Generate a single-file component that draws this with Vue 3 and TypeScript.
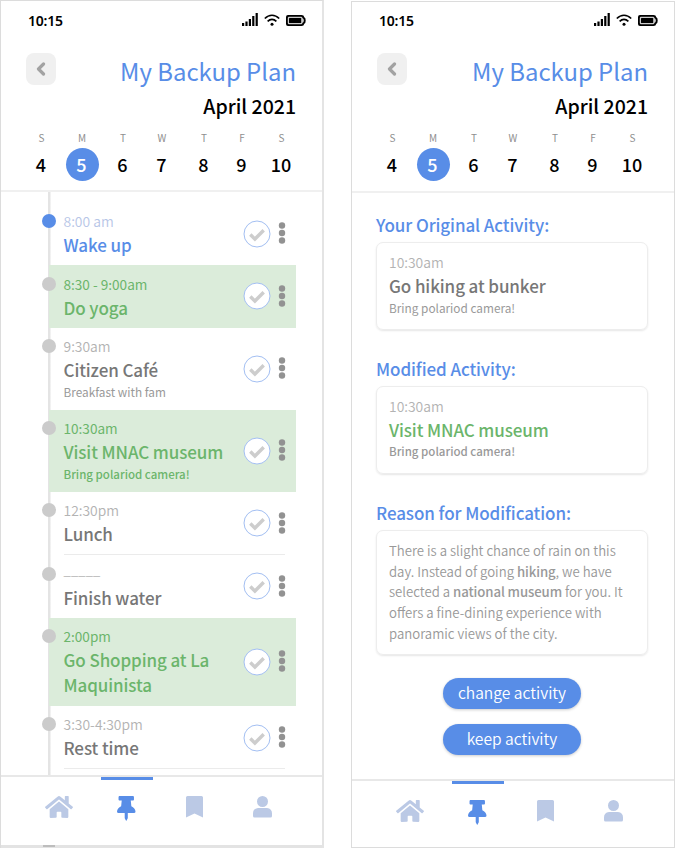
<script setup lang="ts">
import { h, type FunctionalComponent } from 'vue'

interface Day { letter: string; date: number }
interface Activity {
  time: string
  title: string
  note?: string
  size: 'short' | 'tall' | 'wrapped'
  kind?: 'current' | 'backup' | 'untimed'
  divider?: boolean
}

const days: Day[] = [
  { letter: 'S', date: 4 },
  { letter: 'M', date: 5 },
  { letter: 'T', date: 6 },
  { letter: 'W', date: 7 },
  { letter: 'T', date: 8 },
  { letter: 'F', date: 9 },
  { letter: 'S', date: 10 },
]
const selected = 5

const activities: Activity[] = [
  { time: '8:00 am', title: 'Wake up', size: 'short', kind: 'current' },
  { time: '8:30 - 9:00am', title: 'Do yoga', size: 'short', kind: 'backup' },
  { time: '9:30am', title: 'Citizen Café', note: 'Breakfast with fam', size: 'tall' },
  { time: '10:30am', title: 'Visit MNAC museum', note: 'Bring polariod camera!', size: 'tall', kind: 'backup' },
  { time: '12:30pm', title: 'Lunch', size: 'short', divider: true },
  { time: '_____', title: 'Finish water', size: 'short', kind: 'untimed' },
  { time: '2:00pm', title: 'Go Shopping at La Maquinista', size: 'wrapped', kind: 'backup' },
  { time: '3:30-4:30pm', title: 'Rest time', size: 'short', divider: true },
]

const comparisons = [
  { heading: 'Your Original Activity:', title: 'Go hiking at bunker', backup: false },
  { heading: 'Modified Activity:', title: 'Visit MNAC museum', backup: true },
]

const screens = ['plan', 'detail'] as const

const glyphs: Record<string, { box: string; d: string }> = {
  home: {
    box: '0 32 576 448',
    d: 'M280.37 148.26L96 300.11V464a16 16 0 0 0 16 16l112.06-.29a16 16 0 0 0 15.92-16V368a16 16 0 0 1 16-16h64a16 16 0 0 1 16 16v95.64a16 16 0 0 0 16 16.05L464 480a16 16 0 0 0 16-16V300L295.67 148.26a12.19 12.19 0 0 0-15.3 0zM571.6 251.47L488 182.56V44.05a12 12 0 0 0-12-12h-56a12 12 0 0 0-12 12v72.61L318.47 43a48 48 0 0 0-61 0L4.34 251.47a12 12 0 0 0-1.6 16.9l25.5 31A12 12 0 0 0 45.15 301l235.22-193.74a12.19 12.19 0 0 1 15.3 0L530.9 301a12 12 0 0 0 16.9-1.6l25.5-31a12 12 0 0 0-1.7-16.93z',
  },
  pin: {
    box: '0 0 384 512',
    d: 'M298.028 214.267L285.793 96H328c13.255 0 24-10.745 24-24V24c0-13.255-10.745-24-24-24H56C42.745 0 32 10.745 32 24v48c0 13.255 10.745 24 24 24h42.207L85.972 214.267C37.465 236.82 0 277.261 0 328c0 13.255 10.745 24 24 24h136v104.007c0 1.242.289 2.467.845 3.578l24 48c2.941 5.882 11.364 5.893 14.311 0l24-48a8.008 8.008 0 0 0 .845-3.578V352h136c13.255 0 24-10.745 24-24-.001-51.183-37.983-91.42-85.973-113.733z',
  },
  bookmark: { box: '0 0 17 21.5', d: 'M1.5 0H15.5Q17 0 17 1.5V21.5L8.5 17.4L0 21.5V1.5Q0 0 1.5 0Z' },
  user: {
    box: '0 0 19 21.5',
    d: 'M9.5 0a5.5 5.5 0 1 1 0 11a5.500 5.500 0 1 1 0-11zM5 12H14Q19 12.600 19 17.500V20Q19 21.500 17.500 21.500H1.500Q0 21.500 0 20V17.500Q0 12.600 5 12Z',
  },
}

const Glyph: FunctionalComponent<{ name: string }> = (props) =>
  h('svg', { viewBox: glyphs[props.name].box, fill: 'currentColor' }, [h('path', { d: glyphs[props.name].d })])
Glyph.props = ['name']

const tabs = ['home', 'pin', 'bookmark', 'user']
</script>

<template>
  <main class="board">
    <section v-for="screen in screens" :key="screen" class="phone" :class="screen">
      <header class="top">
        <div class="status">
          <span class="clock">10:15</span>
          <span class="indicators">
            <svg class="signal" viewBox="0 0 16 13">
              <path d="M0 10h2.200v3H0zM3.400 8.500h2.200V13H3.400zM6.800 6h2.200v7H6.800zM10.200 3h2.200v10h-2.200zM13.600 0h2.200v13h-2.200z" />
            </svg>
            <svg class="wifi" viewBox="0 0 16 12" fill="none" stroke="#000" stroke-width="1.6">
              <path d="M.8 4.500C5 .1 11 .1 15.200 4.500M3.600 7.400C6.300 4.700 9.700 4.700 12.400 7.400" />
              <circle cx="8" cy="10.200" r="1.500" fill="#000" stroke="none" />
            </svg>
            <svg class="battery" viewBox="0 0 20 11">
              <path d="M2 0H15.500Q18 0 18.300 2.300Q19.700 2.700 19.700 5.500Q19.700 8.300 18.300 8.700Q18 11 15.500 11H2Q0 11 0 9V2Q0 0 2 0Z" />
              <path d="M3 1.700H15Q16.400 1.700 16.400 3Q17.900 3.600 17.900 5.500Q17.900 7.400 16.400 8Q16.400 9.300 15 9.300H3Q1.800 9.300 1.800 8V3Q1.800 1.700 3 1.700Z" fill="#ccc" />
              <rect x="3" y="2.900" width="12.200" height="5.200" rx=".5" />
            </svg>
          </span>
        </div>
        <div class="heading">
          <button class="back" aria-label="Back">
            <svg viewBox="0 0 10 14"><path d="M7.500 2L2.500 7L7.500 12" fill="none" stroke="#a2a2a2" stroke-width="3.200" stroke-linecap="round" stroke-linejoin="round" /></svg>
          </button>
          <div class="titles">
            <h1>My Backup Plan</h1>
            <p class="month">April 2021</p>
          </div>
        </div>
        <div class="week">
          <div v-for="day in days" :key="day.date" class="day">
            <span class="letter">{{ day.letter }}</span>
            <span class="date" :class="{ selected: day.date === selected }"><span>{{ day.date }}</span></span>
          </div>
        </div>
      </header>

      <div v-if="screen === 'plan'" class="timeline">
        <article v-for="item in activities" :key="item.title" class="row" :class="[item.size, item.kind, { divider: item.divider }]">
          <i class="dot"></i>
          <div class="text">
            <p class="time">{{ item.time }}</p>
            <h2>{{ item.title }}</h2>
            <p v-if="item.note" class="note">{{ item.note }}</p>
          </div>
          <svg class="check" viewBox="0 0 28 28">
            <circle cx="14" cy="14" r="13" fill="#fff" stroke="#a3bff2" />
            <path d="M7.300 14.500L11.900 19.100L20.700 10.200" fill="none" stroke="#cdcdcd" stroke-width="3.400" />
          </svg>
          <svg class="more" viewBox="0 0 8 22" fill="#929292">
            <circle cx="4" cy="3.500" r="3.200" /><circle cx="4" cy="11" r="3.200" /><circle cx="4" cy="18.500" r="3.200" />
          </svg>
        </article>
      </div>

      <div v-else class="body">
        <section v-for="entry in comparisons" :key="entry.heading" class="group">
          <h3>{{ entry.heading }}</h3>
          <div class="card" :class="{ backup: entry.backup }">
            <p class="time">10:30am</p>
            <h2>{{ entry.title }}</h2>
            <p class="note">Bring polariod camera!</p>
          </div>
        </section>
        <section class="group">
          <h3>Reason for Modification:</h3>
          <div class="card reason">
            There is a slight chance of rain on this<br />day. Instead of going <b>hiking</b>, we have<br />selected a <b>national museum</b> for you. It<br />offers a fine-dining experience with<br />panoramic views of the city.
          </div>
        </section>
        <div class="actions">
          <button>change activity</button>
          <button>keep activity</button>
        </div>
      </div>

      <nav class="tabs">
        <a v-for="tab in tabs" :key="tab" class="tab" :class="[tab, { active: tab === 'pin' }]"><Glyph :name="tab" /></a>
      </nav>
      <div v-if="screen === 'plan'" class="edge"><i></i></div>
    </section>
  </main>
</template>

<style>
body { background: #fff; }
</style>

<style scoped>
* { box-sizing: border-box; }
h1, h2, h3, p { margin: 0; }
button { border: 0; padding: 0; font: inherit; }
svg { display: block; flex: none; }
.board {
  display: flex;
  justify-content: space-between;
  width: 675px;
  height: 848px;
  overflow: hidden;
  font-family: "Noto Sans CJK JP", "Noto Sans", sans-serif;
  font-weight: 400;
}
.phone {
  display: flex;
  flex-direction: column;
  width: 324px;
  height: 848px;
  border: 1px solid #dcdcdc;
  border-right: 2px solid #e4e4e4;
  border-bottom: 0;
  background: #fff;
}
.phone.detail { height: 847px; margin-top: 1px; border: 1px solid #dcdcdc; }
.top { flex: none; height: 191px; border-bottom: 2px solid #f0f0f0; }
.detail .top { height: 192px; margin-top: -1px; }
.status { display: flex; justify-content: space-between; align-items: center; height: 24px; margin: 7px 16px 0 27px; }
.clock { padding-top: 2px; font: 600 14px/24px "Noto Sans", "Open Sans", sans-serif; letter-spacing: -0.2px; }
.indicators { display: flex; align-items: center; gap: 6px; }
.signal { width: 16px; height: 13px; margin-bottom: 1px; }
.wifi { width: 16px; height: 12px; }
.battery { width: 20px; height: 11px; }
.heading { display: flex; justify-content: space-between; margin: 20px 26px 0 25px; }
.back { display: flex; align-items: center; justify-content: center; width: 30px; height: 32px; margin-top: 1px; border-radius: 8px; background: #f0f0f0; }
.back svg { width: 10px; height: 14px; margin-right: 1px; }
.titles { text-align: right; }
h1 { font-weight: 400; font-size: 23.900px; line-height: 37px; color: #588de7; white-space: nowrap; }
.month { font-weight: 500; font-size: 19.500px; line-height: 33px; color: #000; }
.week { display: grid; grid-template-columns: 41px 40px 42px 36px 48px 28px 51px; margin: 8px 0 0 20px; }
.day { display: flex; flex-direction: column; align-items: center; }
.letter { font-size: 10px; line-height: 15px; color: #8f8f8f; }
.date { display: flex; align-items: center; justify-content: center; width: 33px; height: 33px; margin-top: 3px; padding-right: 1px; border-radius: 50%; font-weight: 500; font-size: 18px; line-height: 27px; color: #000; }
.date.selected { background: #588de7; color: #fff; }
.timeline {
  flex: none;
  height: 583px;
  padding: 10.500px 0 0 48px;
  overflow: hidden;
  background: linear-gradient(#e4e4e4, #e4e4e4) 46.500px 0 / 2.500px 100% no-repeat;
}
.row { position: relative; display: flex; align-items: center; width: 247px; padding-left: 14.500px; }
.row.short { height: 62.600px; }
.row.tall { height: 82px; }
.row.wrapped { height: 88px; }
.row.backup { background: #dbecda; }
.row.divider { height: 63.500px; background: linear-gradient(#ebebeb, #ebebeb) 15px 100% / 221px 1px no-repeat; }
.dot { position: absolute; left: -7.500px; top: 11.500px; width: 14px; height: 14px; border-radius: 50%; background: #cbcbcb; }
.current .dot { background: #588de7; }
.text { align-self: flex-start; width: 179px; padding-top: 7.500px; }
.check { width: 28px; height: 28px; }
.more { width: 8px; height: 22px; margin: -1px 0 0 7px; }
.time { font-weight: 350; font-size: 13.900px; line-height: 22px; color: #b3b3b3; white-space: nowrap; }
.untimed .time { line-height: 14px; padding-bottom: 8px; font-size: 13px; letter-spacing: .15px; }
h2 { font-weight: 500; font-size: 17px; line-height: 25px; letter-spacing: -.1px; color: #777; }
.note { font-weight: 400; font-size: 11.800px; line-height: 19px; color: #999; }
.current .time { color: #b7c6e7; }
.current h2 { color: #588de7; }
.row.backup .time, .row.backup h2, .row.backup .note, .card.backup h2 { color: #6bb56b; }
.row.backup .time { font-weight: 400; font-size: 13.600px; }
.row.backup .note { font-weight: 500; font-size: 11.500px; line-height: 20px; }
.body { flex: none; height: 587px; padding: 19px 26px 0 24px; }
.group { height: 144px; }
h3 { font-weight: 500; font-size: 17px; line-height: 26px; letter-spacing: -.08px; color: #588de7; padding-bottom: 4px; }
.card { height: 88px; padding: 7.500px 12px; border: 1px solid #ededed; border-radius: 7px; box-shadow: 0 1px 2px #0000001a; }
.card.backup .note { font-weight: 500; font-size: 11.500px; }
.card.reason { height: 125px; padding-top: 10px; font-weight: 350; font-size: 13.200px; line-height: 20.700px; color: #999; white-space: nowrap; }
.reason b { font-weight: 500; letter-spacing: -.1px; }
.actions { display: flex; flex-direction: column; align-items: center; gap: 15px; padding-top: 34px; }
.actions button { width: 138px; height: 31px; border-radius: 16px; background: #588de7; color: #fff; font-weight: 350; font-size: 15.600px; line-height: 29px; padding-bottom: 2px; box-shadow: 0 1px 3px #0003; }
.tabs { display: grid; grid-template-columns: 68px 68px 68px 68px; justify-content: center; flex: 1; border-top: 2px solid #e8e8e8; padding-right: 2px; }
.detail .tabs { margin-top: -1px; padding-right: 3px; }
.tab { display: flex; justify-content: center; padding-top: 19px; color: #bbc9e5; }
.tab.active { color: #588de7; background: linear-gradient(#588de7, #588de7) 50% 0 / 52px 3px no-repeat; }
.home svg { width: 28px; height: 22px; }
.pin svg { width: 18.500px; height: 24.670px; }
.bookmark svg { width: 17px; height: 21.500px; }
.user svg { width: 19px; height: 21.500px; }
.edge { flex: none; height: 3px; padding-left: 42px; background: #e3e3e3; }
.edge i { display: block; width: 12px; height: 2px; background: #bdbdbd; }
</style>
